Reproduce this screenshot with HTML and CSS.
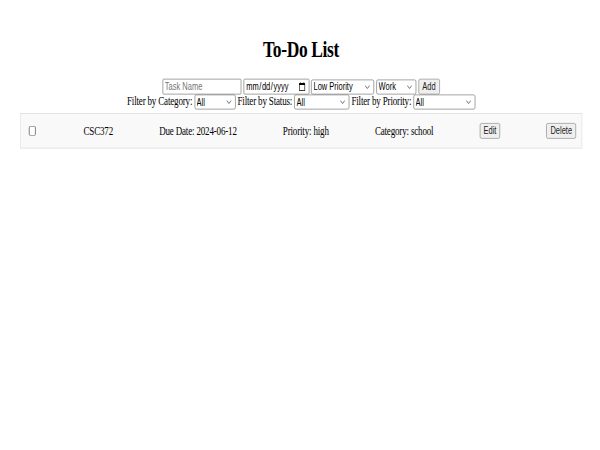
FILE: index.html
```html
<!DOCTYPE html>
<html lang="en">
<head>
<meta charset="utf-8">
<title>To-Do List</title>
<link rel="stylesheet" href="styles.css">
</head>
<body>
<div class="viewport">
<div class="page">
  <h1 class="title">To-Do List</h1>
  <form class="controls">
    <div class="add-line">
      <input class="field task-input" type="text" placeholder="Task Name">
      <input class="field date-input" type="date">
      <select class="sel sel-priority">
        <option>Low Priority</option>
        <option>Medium Priority</option>
        <option>High Priority</option>
      </select>
      <select class="sel sel-category">
        <option>Work</option>
        <option>Personal</option>
        <option>School</option>
      </select>
      <button class="btn" type="button">Add</button>
    </div>
    <div class="filter-line">
      <label>Filter by Category:</label>
      <select class="sel filter-category">
        <option>All</option>
        <option>Work</option>
        <option>Personal</option>
        <option>School</option>
      </select>
      <label>Filter by Status:</label>
      <select class="sel filter-status">
        <option>All</option>
        <option>Completed</option>
        <option>Incomplete</option>
      </select>
      <label>Filter by Priority:</label>
      <select class="sel filter-priority">
        <option>All</option>
        <option>Low Priority</option>
        <option>Medium Priority</option>
        <option>High Priority</option>
      </select>
    </div>
  </form>
  <ul class="task-list">
    <li class="task">
      <input class="task-check" type="checkbox">
      <span>CSC372</span>
      <span>Due Date: 2024-06-12</span>
      <span>Priority: high</span>
      <span>Category: school</span>
      <button class="btn" type="button">Edit</button>
      <button class="btn" type="button">Delete</button>
    </li>
  </ul>
</div>
</div>
</body>
</html>
```

FILE: styles.css
```css
html, body {
  margin: 0;
  overflow: hidden;
  background: #fff;
}

.viewport {
  width: 600px;
  height: 450px;
  overflow: hidden;
}

.page {
  width: 1067px;
  height: 600px;
  box-sizing: border-box;
  padding: 48px 32px 0 35.5px;
  transform: scale(0.5625, 0.75);
  transform-origin: 0 0;
  font-family: "Liberation Serif", "Times New Roman", serif;
  font-size: 16px;
  letter-spacing: -0.3px;
  color: #000;
}

.title {
  margin: 0 0 21px;
  font-size: 31px;
  letter-spacing: -0.6px;
  font-weight: bold;
  text-align: center;
}

.controls {
  margin: 0;
  text-align: center;
}

input, select, button {
  font-family: "Liberation Sans", Arial, sans-serif;
  font-size: 13.3333px;
  letter-spacing: 0;
}

.field {
  box-sizing: border-box;
  height: 21px;
  padding: 1px 3px;
  border: 1px solid #767676;
  border-radius: 2px;
  background: #fff;
}

.task-input { width: 140px; }
.date-input { width: 117px; }

.sel {
  appearance: none;
  -webkit-appearance: none;
  box-sizing: border-box;
  height: 20px;
  padding: 0 18px 0 3px;
  border: 1px solid #767676;
  border-radius: 3px;
  color: #000;
  background: #fff url("data:image/svg+xml,%3Csvg xmlns='http://www.w3.org/2000/svg' width='10' height='6' viewBox='0 0 10 6'%3E%3Cpath d='M1 1 L5 5 L9 1' fill='none' stroke='%23555' stroke-width='1.2'/%3E%3C/svg%3E") no-repeat right 6px center;
  vertical-align: baseline;
}

.sel-priority { width: 112px; }
.sel-category { width: 71px; }
.filter-category { width: 73px; }
.filter-status { width: 98px; }
.filter-priority { width: 110px; }

.btn {
  box-sizing: border-box;
  height: 21px;
  padding: 1px 6px;
  border: 1px solid #8a8a8a;
  border-radius: 3px;
  background: #efefef;
  color: #222;
}

.task-list {
  list-style: none;
  margin: 5px 0 0;
  padding: 0;
}

.task {
  display: flex;
  justify-content: space-between;
  align-items: center;
  padding: 12px 10px;
  border: 1px solid #ddd;
  background: #f9f9f9;
}

.task-check {
  appearance: none;
  width: 13px;
  height: 13px;
  margin: 3px 3px 3px 4px;
  border-style: solid;
  border-color: #8f8f8f;
  border-width: 1.4px 2px;
  border-radius: 3px;
  background: #fff;
}
```
